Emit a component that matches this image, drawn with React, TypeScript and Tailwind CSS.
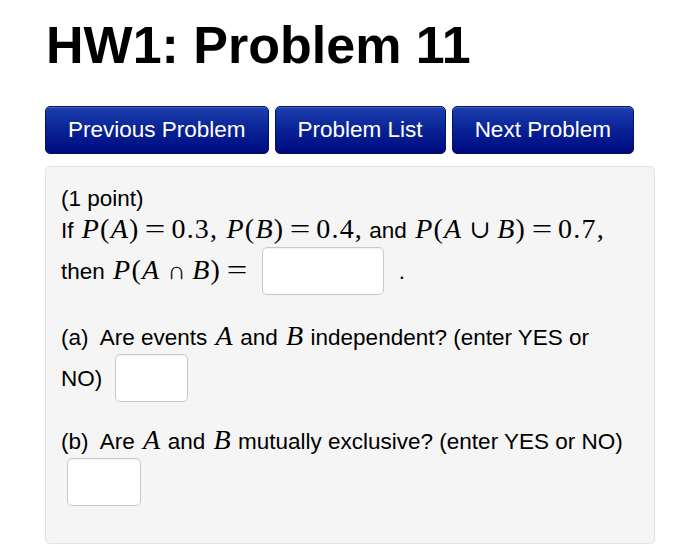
import React from "react";

const Math = ({ children }: { children: React.ReactNode }) => (
  <span className="font-['Liberation_Serif','DejaVu_Serif',serif] text-[28px] leading-none tracking-[1.2px] ml-[2px]">
    {children}
  </span>
);

const V = ({ children }: { children: React.ReactNode }) => (
  <i className="italic">{children}</i>
);

const Eq = () => (
  <span className="inline-block w-[20px] mx-[6px] text-center tracking-normal scale-x-[1.3]">=</span>
);
const Op = ({ children }: { children: React.ReactNode }) => (
  <span className="mx-[7px] text-[25px] tracking-normal">{children}</span>
);

const Box = ({ w }: { w: string }) => (
  <span
    className={`inline-block h-[48px] ${w} align-[-16px] bg-white border border-[#c9c9c9] rounded-[5px] shadow-[inset_0_1px_1px_rgba(0,0,0,0.06)]`}
  />
);

const Btn = ({ children }: { children: React.ReactNode }) => (
  <button className="h-[48px] px-[22px] rounded-[5px] border border-[#00126a] bg-gradient-to-b from-[#1d3fae] via-[#0a2196] to-[#000a7e] text-white text-[22.5px] leading-none shadow-[inset_0_1px_0_rgba(255,255,255,0.2)]">
    {children}
  </button>
);

export default function App() {
  return (
    <div className="w-[700px] h-[558px] bg-white px-[45px] pt-[19px] font-['Liberation_Sans',Arial,sans-serif] text-black">
      <h1 className="text-[52px] leading-none font-bold ml-[1px]">HW1: Problem 11</h1>
      <div className="flex gap-[6px] mt-[35px]">
        <Btn>Previous Problem</Btn>
        <Btn>Problem List</Btn>
        <Btn>Next Problem</Btn>
      </div>
      <div className="mt-[12px] w-[610px] bg-[#f5f5f5] border border-[#e3e3e3] rounded-[5px] pl-[15px] pr-[10px] pt-[16px] pb-[37px] text-[22.5px] leading-[32px]">
        <div>(1 point)</div>
        <div>
          If{" "}
          <Math>
            <V>P</V>(<V>A</V>)<Eq />0.3,
          </Math>{" "}
          <Math>
            <V>P</V>(<V>B</V>)<Eq />0.4,
          </Math>{" "}
          and{" "}
          <Math>
            <V>P</V>(<V>A</V>
            <Op>∪</Op>
            <V>B</V>)<Eq />0.7,
          </Math>
          <br />
          then{" "}
          <Math>
            <V>P</V>(<V>A</V>
            <Op>∩</Op>
            <V>B</V>)<Eq />
          </Math>{" "}
          <Box w="w-[122px] ml-[3px]" /> <span className="ml-[8px]">.</span>
        </div>
        <div className="mt-[27px]">
          (a)&nbsp; Are events{" "}
          <Math>
            <V>A</V>
          </Math>{" "}
          and{" "}
          <Math>
            <V>B</V>
          </Math>{" "}
          independent? (enter YES or
          <br />
          NO) <Box w="w-[73px] ml-[6px]" />
        </div>
        <div className="mt-[24px]">
          (b)&nbsp; Are{" "}
          <Math>
            <V>A</V>
          </Math>{" "}
          and{" "}
          <Math>
            <V>B</V>
          </Math>{" "}
          mutually exclusive? (enter YES or NO)
          <br />
          <Box w="w-[74px] ml-[6px]" />
        </div>
      </div>
    </div>
  );
}
